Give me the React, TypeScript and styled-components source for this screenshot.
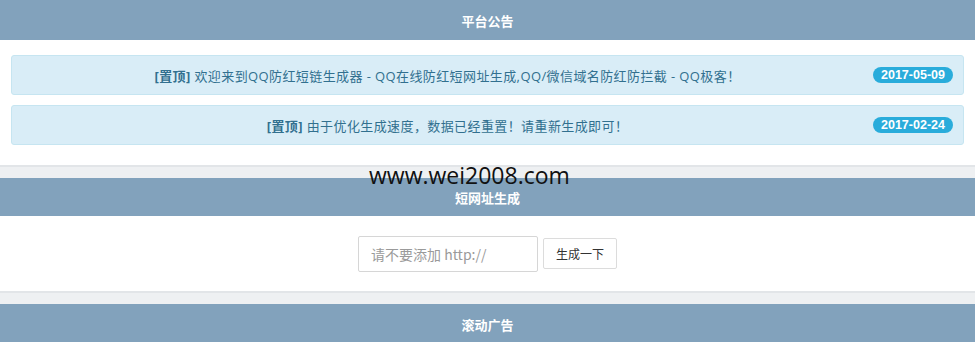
import React from "react";
import styled, { createGlobalStyle } from "styled-components";

const Global = createGlobalStyle`
  html, body { margin: 0; padding: 0; }
  body {
    background: #eef0f2;
    font-family: "Noto Sans CJK SC", "Open Sans", sans-serif;
    font-size: 13px;
    color: #333;
  }
`;

const Page = styled.div`
  position: relative;
  width: 975px;
`;

const Panel = styled.section`
  background: #fff;
  border-bottom: 2px solid #e2e5e8;
  margin-bottom: 11px;
`;

const Header = styled.div<{ $h: number }>`
  height: ${(p) => p.$h}px;
  background: #82a2bc;
  color: #fff;
  font-weight: 700;
  font-size: 13px;
  display: flex;
  align-items: center;
  justify-content: center;
`;

const NoticeBody = styled.div`
  padding: 15px 11px 20px 11px;
  display: flex;
  flex-direction: column;
  gap: 10px;
`;

const Alert = styled.div`
  height: 38px;
  background: #d9edf7;
  border: 1px solid #c6e5f1;
  border-radius: 3px;
  color: #31708f;
  display: flex;
  align-items: center;
  padding: 0 10px;
`;

const AlertText = styled.div`
  flex: 1;
  text-align: center;
  font-family: "Open Sans", "Noto Sans CJK SC", sans-serif;
  font-size: 13px;
  letter-spacing: 0.4px;
`;

const Tag = styled.b`
  font-weight: 700;
`;

const Badge = styled.span`
  width: 80px;
  height: 16px;
  border-radius: 8px;
  background: #29acdb;
  color: #fff;
  font-family: "Liberation Sans", Arial, sans-serif;
  font-weight: 700;
  font-size: 12.5px;
  display: flex;
  align-items: center;
  justify-content: center;
`;

const FormBody = styled.div`
  height: 75px;
  display: flex;
  align-items: center;
  justify-content: center;
  gap: 5px;
`;

const Input = styled.input`
  box-sizing: border-box;
  width: 180px;
  height: 36px;
  border: 1px solid #d6d6d6;
  border-radius: 2px;
  padding: 0 12px;
  font-family: "Noto Sans CJK SC", "Open Sans", sans-serif;
  font-size: 14px;
  outline: none;
  &::placeholder { color: #9a9a9a; }
`;

const Button = styled.button`
  box-sizing: border-box;
  height: 31px;
  width: 74px;
  background: #fff;
  border: 1px solid #dcdcdc;
  border-radius: 2px;
  font-family: "Noto Sans CJK SC", sans-serif;
  font-size: 12px;
  color: #333;
`;

const Watermark = styled.div`
  position: absolute;
  left: 369px;
  top: 159px;
  font-family: "Open Sans", sans-serif;
  font-size: 23px;
  color: #111;
  pointer-events: none;
`;

const notices = [
  {
    text: "欢迎来到QQ防红短链生成器 - QQ在线防红短网址生成,QQ/微信域名防红防拦截 - QQ极客！",
    date: "2017-05-09",
  },
  { text: "由于优化生成速度，数据已经重置！请重新生成即可！", date: "2017-02-24" },
];

export default function App() {
  return (
    <Page>
      <Global />
      <Panel>
        <Header $h={40}>平台公告</Header>
        <NoticeBody>
          {notices.map((n) => (
            <Alert key={n.date}>
              <AlertText>
                <Tag>[置顶]</Tag> {n.text}
              </AlertText>
              <Badge>{n.date}</Badge>
            </Alert>
          ))}
        </NoticeBody>
      </Panel>
      <Panel>
        <Header $h={38}>短网址生成</Header>
        <FormBody>
          <Input placeholder="请不要添加 http://" />
          <Button>生成一下</Button>
        </FormBody>
      </Panel>
      <Panel>
        <Header $h={40}>滚动广告</Header>
      </Panel>
      <Watermark>www.wei2008.com</Watermark>
    </Page>
  );
}
